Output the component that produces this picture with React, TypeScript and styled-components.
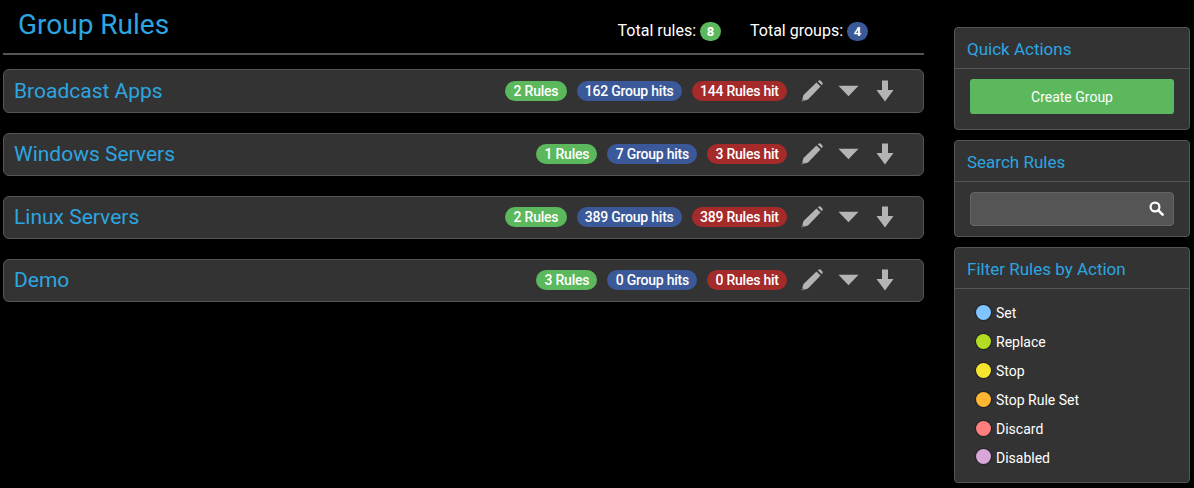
import React from 'react';
import styled, { createGlobalStyle } from 'styled-components';

const groups = [
  { name: 'Broadcast Apps', rules: 2, groupHits: 162, rulesHit: 144 },
  { name: 'Windows Servers', rules: 1, groupHits: 7, rulesHit: 3 },
  { name: 'Linux Servers', rules: 2, groupHits: 389, rulesHit: 389 },
  { name: 'Demo', rules: 3, groupHits: 0, rulesHit: 0 },
];

const actions = [
  { label: 'Set', color: '#7fc4ff' },
  { label: 'Replace', color: '#b2dd22' },
  { label: 'Stop', color: '#f5e52e' },
  { label: 'Stop Rule Set', color: '#ffb733' },
  { label: 'Discard', color: '#ff7f7f' },
  { label: 'Disabled', color: '#d8a6d8' },
];

const colors = { green: '#5cb85c', blue: '#3b5998', red: '#a52a2a' };

export default function App() {
  return (
    <Page>
      <GlobalStyle />
      <Main>
        <Header>
          <Title>Group Rules</Title>
          <Totals>
            <Total>
              Total rules: <CountBadge $color={colors.green}>8</CountBadge>
            </Total>
            <Total>
              Total groups: <CountBadge $color={colors.blue}>4</CountBadge>
            </Total>
          </Totals>
        </Header>
        <GroupList>
          {groups.map((g) => (
            <Group key={g.name}>
              <GroupName>{g.name}</GroupName>
              <Badges>
                <Badge $color={colors.green}>{g.rules} Rules</Badge>
                <Badge $color={colors.blue}>{g.groupHits} Group hits</Badge>
                <Badge $color={colors.red}>{g.rulesHit} Rules hit</Badge>
              </Badges>
              <Tools>
                <svg width="22" height="22" viewBox="0 0 22 22">
                  <path d="M0.5 21.5 L2.5 15 L15.5 2.5 L19.5 6.5 L7 19.5 Z M16.8 1.2 L18 0.4 Q18.8 0 19.5 0.6 L21.4 2.5 Q22 3.2 21.6 4 L20.8 5.2 Z" fill="#b4b4b4" />
                  <path d="M0.5 21.5 L1.4 18.4 L3.6 20.6 Z" fill="#333" opacity="0.5" />
                </svg>
                <svg width="21" height="12" viewBox="0 0 22 12">
                  <path d="M0.5 0.5 H21.5 L11 11.5 Z" fill="#b4b4b4" />
                </svg>
                <svg width="18" height="22" viewBox="0 0 18 22">
                  <path d="M6 0.5 H12 V10 H17.5 L9 21.5 L0.5 10 H6 Z" fill="#b4b4b4" />
                </svg>
              </Tools>
            </Group>
          ))}
        </GroupList>
      </Main>
      <Sidebar>
        <Panel>
          <PanelHeading>Quick Actions</PanelHeading>
          <PanelBody>
            <CreateButton>Create Group</CreateButton>
          </PanelBody>
        </Panel>
        <Panel>
          <PanelHeading>Search Rules</PanelHeading>
          <PanelBody $tight>
            <SearchBox>
              <SearchInput type="text" />
              <svg width="15" height="15" viewBox="0 0 15 15">
                <circle cx="6" cy="6" r="4.4" fill="none" stroke="#fff" strokeWidth="2.2" />
                <path d="M9.4 9.4 L13.6 13.6" stroke="#fff" strokeWidth="2.6" strokeLinecap="round" />
              </svg>
            </SearchBox>
          </PanelBody>
        </Panel>
        <Panel>
          <PanelHeading>Filter Rules by Action</PanelHeading>
          <FilterList>
            {actions.map((a) => (
              <FilterItem key={a.label}>
                <Dot $color={a.color} />
                <FilterLabel>{a.label}</FilterLabel>
              </FilterItem>
            ))}
          </FilterList>
        </Panel>
      </Sidebar>
    </Page>
  );
}

const GlobalStyle = createGlobalStyle`
  html, body {
    margin: 0;
    background: #000;
    font-family: Roboto, "Liberation Sans", sans-serif;
  }
`;

const Page = styled.div`
  display: flex;
  align-items: flex-start;
  gap: 30px;
  width: 1194px;
  height: 488px;
  box-sizing: border-box;
  padding: 0 4px 0 3px;
  overflow: hidden;
`;

const Main = styled.div`
  width: 921px;
  flex: none;
`;

const Header = styled.div`
  display: flex;
  align-items: flex-start;
  justify-content: space-between;
  height: 53px;
  border-bottom: 2px solid #555;
  padding: 0 56px 0 15px;
`;

const Title = styled.h1`
  margin: 9px 0 0;
  font-size: 28px;
  line-height: 32px;
  font-weight: 400;
  color: #2ca5e0;
`;

const Totals = styled.div`
  display: flex;
  gap: 29px;
  margin-top: 21px;
`;

const Total = styled.span`
  font-size: 16px;
  line-height: 20px;
  color: #fff;
`;

const CountBadge = styled.span<{ $color: string }>`
  display: inline-block;
  min-width: 21px;
  height: 19px;
  box-sizing: border-box;
  padding: 0 6px;
  border-radius: 10px;
  background: ${(p) => p.$color};
  color: #fff;
  font-size: 13px;
  font-weight: 700;
  line-height: 19px;
  text-align: center;
  vertical-align: 0;
`;

const GroupList = styled.div`
  display: flex;
  flex-direction: column;
  gap: 20px;
  margin-top: 14.49px;
`;

const Group = styled.div`
  display: flex;
  align-items: center;
  height: 43.2px;
  box-sizing: border-box;
  padding: 0 29px 0.6px 10px;
  background: #333;
  border: 1px solid #555;
  border-radius: 6px;
`;

const GroupName = styled.div`
  flex: 1;
  font-size: 21px;
  color: #2ca5e0;
`;

const Badges = styled.div`
  display: flex;
  gap: 10px;
`;

const Badge = styled.span<{ $color: string }>`
  height: 20px;
  padding: 0 8.2px;
  border-radius: 10px;
  background: ${(p) => p.$color};
  color: #fff;
  font-size: 14px;
  font-weight: 500;
  letter-spacing: -0.22px;
  line-height: 20px;
  white-space: nowrap;
`;

const Tools = styled.div`
  display: flex;
  align-items: center;
  gap: 15px;
  margin-left: 14px;

  svg:last-child {
    margin-left: 2px;
  }
`;

const Sidebar = styled.div`
  display: flex;
  flex-direction: column;
  gap: 10px;
  width: 236px;
  margin-top: 27px;
  flex: none;
`;

const Panel = styled.div`
  background: #333;
  border: 1px solid #555;
  border-radius: 4px;
`;

const PanelHeading = styled.div`
  height: 41px;
  box-sizing: border-box;
  padding: 0 12px;
  border-bottom: 1px solid #555;
  color: #2ca5e0;
  font-size: 17px;
  line-height: 42.6px;
`;

const PanelBody = styled.div<{ $tight?: boolean }>`
  padding: 10px 15px ${(p) => (p.$tight ? '10.4px' : '14.6px')};
`;

const CreateButton = styled.button`
  display: block;
  width: 100%;
  height: 35px;
  border: 0;
  border-radius: 3px;
  background: #5cb85c;
  color: #fff;
  font-family: inherit;
  font-size: 14px;
`;

const SearchBox = styled.div`
  display: flex;
  align-items: center;
  height: 34px;
  box-sizing: border-box;
  padding-right: 9px;
  background: #555;
  border: 1px solid #666;
  border-radius: 4px;
`;

const SearchInput = styled.input`
  flex: 1;
  min-width: 0;
  border: 0;
  background: transparent;
  outline: none;
`;

const FilterList = styled.div`
  display: flex;
  flex-direction: column;
  gap: 13.9px;
  padding: 16px 21px 18px;
`;

const FilterItem = styled.div`
  display: flex;
  align-items: center;
  gap: 5px;
  height: 15px;
  color: #fff;
  font-size: 14px;
`;

const FilterLabel = styled.span`
  padding-top: 2px;
`;

const Dot = styled.span<{ $color: string }>`
  width: 15px;
  height: 15px;
  border-radius: 50%;
  background: ${(p) => p.$color};
  box-shadow: 0 0 0 1px #222;
`;
